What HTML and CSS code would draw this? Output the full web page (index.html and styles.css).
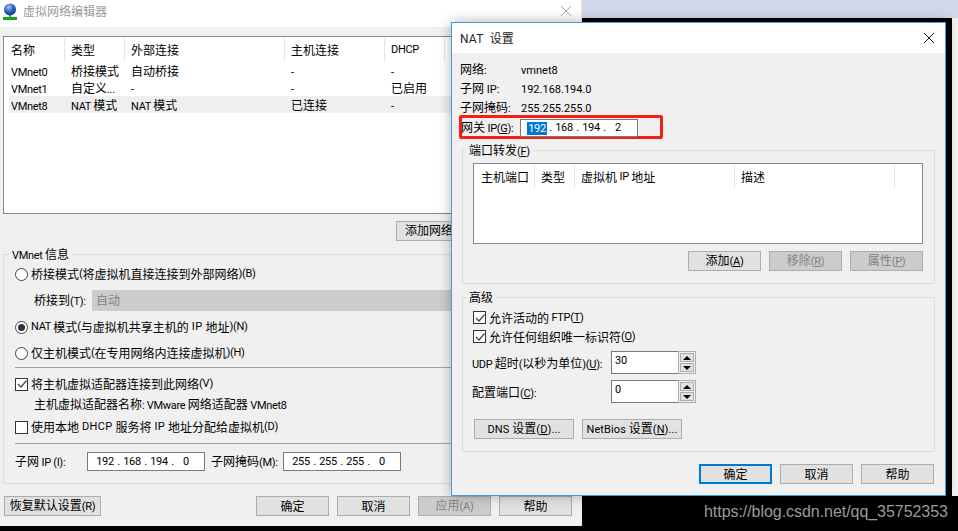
FILE: index.html
```html
<!DOCTYPE html>
<html lang="en">
<head>
    <meta charset="UTF-8">
    <meta name="viewport" content="width=device-width, initial-scale=1.0">
    <title>虚拟网络编辑器</title>
    <link rel="stylesheet" href="styles.css">
</head>
<body>
    <div class="strip"></div>
    <div class="edge"></div>

    <!-- back window -->
    <div class="window editor">
        <div class="titlebar">
            <svg class="app-icon" width="16" height="17" viewBox="0 0 16 17">
                <defs>
                    <radialGradient id="globe" cx="0.4" cy="0.3" r="0.8">
                        <stop offset="0" stop-color="#a9c4f2"/>
                        <stop offset="0.5" stop-color="#2f5fc4"/>
                        <stop offset="1" stop-color="#142f78"/>
                    </radialGradient>
                </defs>
                <rect x="7" y="11" width="2" height="3" fill="#7a8a7a"/>
                <rect x="1" y="14" width="14" height="3" fill="#12a51a"/>
                <circle cx="8" cy="6.5" r="6" fill="url(#globe)"/>
            </svg>
            <span class="title-text">虚拟网络编辑器</span>
            <svg class="close" width="12" height="12" viewBox="0 0 12 12"><path d="M1 1 L11 11 M11 1 L1 11" stroke="#a8a8a8" stroke-width="1" fill="none"/></svg>
        </div>

        <div class="list net-list">
            <div class="list-head">
                <span>名称</span><span>类型</span><span>外部连接</span><span>主机连接</span><span><em>DHCP</em></span>
            </div>
            <div class="list-row"><span><em>VMnet0</em></span><span>桥接模式</span><span>自动桥接</span><span><em>-</em></span><span><em>-</em></span></div>
            <div class="list-row"><span><em>VMnet1</em></span><span>自定义<em>...</em></span><span><em>-</em></span><span><em>-</em></span><span>已启用</span></div>
            <div class="list-row selected"><span><em>VMnet8</em></span><span><em>NAT </em>模式</span><span><em>NAT </em>模式</span><span>已连接</span><span><em>-</em></span></div>
        </div>

        <div class="list-actions">
            <button class="button wide">添加网络<em>(E)...</em></button>
            <button class="button">移除网络<em>(O)</em></button>
        </div>

        <fieldset class="group vmnet-group">
            <legend><em>VMnet </em>信息</legend>
            <div class="option first-option"><span class="radio"></span>桥接模式<em>(</em>将虚拟机直接连接到外部网络<em>)(B)</em></div>
            <div class="bridge-row">
                <span class="bridge-label">桥接到<em>(T):</em></span>
                <div class="select">自动</div>
            </div>
            <div class="option nat-option"><span class="radio checked"></span><em>NAT </em>模式<em>(</em>与虚拟机共享主机的<em class="gap"> IP </em>地址<em>)(N)</em></div>
            <div class="option host-option"><span class="radio"></span>仅主机模式<em>(</em>在专用网络内连接虚拟机<em>)(H)</em></div>
            <div class="rule rule-top"></div>
            <div class="option connect-option">
                <span class="check checked"><svg width="12" height="12" viewBox="0 0 12 12"><path d="M2 6 L5 9 L10.5 2.5" stroke="#444" stroke-width="1.2" fill="none"/></svg></span>将主机虚拟适配器连接到此网络<em>(V)</em>
            </div>
            <div class="adapter-name">主机虚拟适配器名称<em>: VMware </em>网络适配器<em> VMnet8</em></div>
            <div class="option dhcp-option"><span class="check"></span>使用本地<em class="gap">&nbsp;DHCP&nbsp;</em>服务将<em class="gap">&nbsp;IP&nbsp;</em>地址分配给虚拟机<em>(D)</em></div>
            <div class="rule rule-bottom"></div>
            <div class="subnet-row">
                <span class="subnet-label">子网<em> IP (I):</em></span>
                <div class="ip-field"><span>192</span><i>.</i><span>168</span><i>.</i><span>194</span><i>.</i><span>0</span></div>
                <span class="mask-label">子网掩码<em>(M):</em></span>
                <div class="ip-field"><span>255</span><i>.</i><span>255</span><i>.</i><span>255</span><i>.</i><span>0</span></div>
            </div>
        </fieldset>

        <div class="editor-footer">
            <button class="button restore">恢复默认设置<em>(R)</em></button>
            <button class="button">确定</button>
            <button class="button">取消</button>
            <button class="button disabled">应用<em>(A)</em></button>
            <button class="button">帮助</button>
        </div>
    </div>

    <!-- NAT dialog -->
    <div class="window dialog">
        <div class="dialog-title">
            <span><em>NAT&nbsp;&nbsp;</em>设置</span>
            <svg class="dialog-close" width="12" height="12" viewBox="0 0 12 12"><path d="M1 1 L11 11 M11 1 L1 11" stroke="#111" stroke-width="1" fill="none"/></svg>
        </div>
        <div class="dialog-body">
            <div class="info-row"><span>网络<em>:</em></span><span><em>vmnet8</em></span></div>
            <div class="info-row"><span>子网<em> IP:</em></span><span><em>192.168.194.0</em></span></div>
            <div class="info-row"><span>子网掩码<em>:</em></span><span><em>255.255.255.0</em></span></div>
            <div class="gateway">
                <span class="gateway-label">网关<em> IP(<u>G</u>):</em></span>
                <div class="ip-field gateway-field"><span class="picked">192</span><i>.</i><span>168</span><i>.</i><span>194</span><i>.</i><span>2</span></div>
            </div>

            <fieldset class="group forward-group">
                <legend>端口转发<em>(<u>F</u>)</em></legend>
                <div class="list port-list">
                    <div class="list-head">
                        <span>主机端口</span><span>类型</span><span>虚拟机<em>&nbsp;IP&nbsp;</em>地址</span><span>描述</span>
                    </div>
                </div>
                <div class="port-actions">
                    <button class="button">添加<em>(<u>A</u>)</em></button>
                    <button class="button disabled">移除<em>(<u>R</u>)</em></button>
                    <button class="button disabled">属性<em>(<u>P</u>)</em></button>
                </div>
            </fieldset>

            <fieldset class="group advanced-group">
                <legend>高级</legend>
                <div class="adv-check">
                    <span class="check checked"><svg width="12" height="12" viewBox="0 0 12 12"><path d="M2 6 L5 9 L10.5 2.5" stroke="#444" stroke-width="1.2" fill="none"/></svg></span>允许活动的<em>&nbsp;FTP(<u>T</u>)</em>
                </div>
                <div class="adv-check">
                    <span class="check checked"><svg width="12" height="12" viewBox="0 0 12 12"><path d="M2 6 L5 9 L10.5 2.5" stroke="#444" stroke-width="1.2" fill="none"/></svg></span>允许任何组织唯一标识符<em>(<u>O</u>)</em>
                </div>
                <div class="spin-row udp-row">
                    <span class="spin-label"><em>UDP </em>超时<em>(</em>以秒为单位<em>)(<u>U</u>):</em></span>
                    <div class="spin-input">30</div>
                    <div class="spin-buttons">
                        <span class="spin-btn"><b class="tri-up"></b></span>
                        <span class="spin-btn"><b class="tri-down"></b></span>
                    </div>
                </div>
                <div class="spin-row port-row">
                    <span class="spin-label">配置端口<em>(<u>C</u>):</em></span>
                    <div class="spin-input">0</div>
                    <div class="spin-buttons">
                        <span class="spin-btn"><b class="tri-up"></b></span>
                        <span class="spin-btn"><b class="tri-down"></b></span>
                    </div>
                </div>
                <div class="adv-actions">
                    <button class="button setting dns"><em>DNS </em>设置<em>(<u>D</u>)...</em></button>
                    <button class="button setting"><em>NetBios </em>设置<em>(<u>N</u>)...</em></button>
                </div>
            </fieldset>

            <div class="dialog-footer">
                <button class="button default">确定</button>
                <button class="button">取消</button>
                <button class="button">帮助</button>
            </div>
        </div>
    </div>

    <div class="watermark">https://blog.csdn.net/qq_35752353</div>
</body>
</html>
```

FILE: styles.css
```css
* {
    box-sizing: border-box;
}
html, body {
    margin: 0;
    height: 100%;
}
body {
    position: relative;
    width: 958px;
    height: 531px;
    overflow: hidden;
    background-color: #000;
    color: #000;
    font-family: "Noto Sans CJK SC", sans-serif;
    font-size: 12px;
    line-height: 16px;
}
u {
    text-decoration: underline;
}
/* latin runs sit a size below the CJK text */
em,
.ip-field,
.spin-input {
    font-family: Roboto, "Noto Sans", sans-serif;
    font-size: 11px;
    font-style: normal;
    letter-spacing: -0.3px;
}
em.gap {
    letter-spacing: 0.3px;
}

/* desktop behind the windows */
.strip {
    position: absolute;
    left: 582px;
    top: 0;
    width: 376px;
    height: 18px;
    background-color: #d1d6e9;
}
.edge {
    position: absolute;
    left: 952px;
    top: 18px;
    width: 6px;
    height: 478px;
    background-color: #f2f2f2;
}
.window {
    position: absolute;
    background-color: #f0f0f0;
}
.watermark {
    position: absolute;
    left: 704px;
    top: 502px;
    color: #9a9a9a;
    font-family: "Liberation Sans", Arial, sans-serif;
    font-size: 16px;
    line-height: 20px;
    letter-spacing: -0.05px;
}

/* shared controls */
.button {
    width: 73px;
    height: 20px;
    padding: 0;
    border: 1px solid #adadad;
    border-radius: 0;
    background-color: #e1e1e1;
    color: #000;
    font: inherit;
    line-height: 16px;
    white-space: nowrap;
}
.button.disabled {
    background-color: #ccc;
    color: #838383;
}
.group {
    margin: 0;
    padding: 0;
    border: 1px solid #dcdcdc;
    min-width: 0;
}
.group legend {
    margin-left: -7px;
    padding: 0 3px;
    height: 16px;
    line-height: 16px;
}
.list {
    border: 1px solid #828790;
    background-color: #fff;
}
.list-head {
    display: grid;
    height: 24px;
    margin-top: 1px;
}
.list-head > span {
    display: flex;
    align-items: center;
    padding-left: 6px;
    border-right: 1px solid #e5e5e5;
    white-space: pre;
}
.list-row {
    display: grid;
    height: 17px;
    line-height: 17px;
}
.list-row > span {
    padding-left: 6px;
    white-space: nowrap;
    overflow: hidden;
}
.list-row.selected {
    background-color: #efefef;
}
.radio {
    display: inline-block;
    flex: none;
    position: relative;
    width: 13px;
    height: 13px;
    margin-right: 3px;
    border: 1px solid #444;
    border-radius: 50%;
    background-color: #fff;
}
.radio.checked::after {
    content: "";
    position: absolute;
    left: 2px;
    top: 2px;
    width: 7px;
    height: 7px;
    border-radius: 50%;
    background-color: #333;
}
.check {
    display: inline-block;
    flex: none;
    width: 13px;
    height: 13px;
    margin-right: 3px;
    border: 1px solid #333;
    background-color: #fff;
}
.check svg {
    display: block;
    margin: -0.5px;
}
.ip-field {
    display: flex;
    width: 118px;
    height: 19px;
    padding-left: 7px;
    border: 1px solid #7a7a7a;
    background-color: #fff;
    line-height: 17px;
}
.ip-field span {
    width: 20px;
    text-align: center;
}
.ip-field i {
    width: 7px;
    font-style: normal;
    text-align: center;
}

/* back window */
.editor {
    left: 0;
    top: 0;
    width: 582px;
    height: 526px;
    padding: 0 6px 0 3px;
    border-right: 1px solid #e8e8e8;
}
.titlebar {
    display: flex;
    align-items: center;
    height: 27px;
    margin: 0 -6px 0 -3px;
    padding: 0 9px 5px 2px;
    background-color: #fff;
}
.app-icon {
    flex: none;
}
.title-text {
    margin-left: 5px;
    color: #9a9a9a;
}
.close {
    margin-left: auto;
}
.net-list {
    height: 178px;
    margin-top: 9px;
    padding-left: 5px;
}
.net-list .list-head,
.net-list .list-row {
    grid-template-columns: 56px 60px 160px 100px 60px 1fr;
}
.net-list .list-head > span:first-child,
.net-list .list-row > span:first-child {
    padding-left: 2px;
}
.list-actions {
    display: flex;
    justify-content: flex-end;
    gap: 8px;
    margin-top: 7px;
    padding-right: 3px;
}
.list-actions .button {
    width: 81px;
}
.list-actions .wide {
    width: 87px;
}
.vmnet-group {
    height: 238px;
    margin-top: 5px;
    padding: 0 11px;
}
.vmnet-group legend {
    margin-left: -6px;
}
.option {
    display: flex;
    align-items: center;
    height: 20px;
    white-space: pre;
}
.first-option {
    margin-top: 2px;
}
.bridge-row {
    display: flex;
    align-items: center;
    height: 21px;
    margin-top: 6px;
    padding-left: 19px;
}
.bridge-label {
    width: 58px;
}
.select {
    flex: 1;
    height: 21px;
    padding-left: 4px;
    background-color: #ccc;
    color: #838383;
    line-height: 20px;
}
.nat-option {
    margin-top: 6px;
}
.host-option {
    margin-top: 6px;
}
.rule {
    height: 1px;
    background-color: #a0a0a0;
}
.rule-top {
    margin-top: 4px;
}
.connect-option {
    margin-top: 6px;
    white-space: normal;
}
.adapter-name {
    height: 16px;
    margin-top: 2px;
    padding-left: 19px;
}
.dhcp-option {
    margin-top: 5px;
}
.rule-bottom {
    margin-top: 6px;
}
.subnet-row {
    display: flex;
    align-items: center;
    margin-top: 8px;
}
.subnet-label {
    width: 72px;
}
.mask-label {
    width: 72px;
    margin-left: 6px;
}
.editor-footer {
    display: flex;
    gap: 8px;
    margin-top: 12px;
    padding: 0 3px 0 1px;
}
.restore {
    width: 97px;
    margin-right: auto;
}

/* NAT dialog */
.dialog {
    left: 451px;
    top: 22px;
    width: 495px;
    height: 474px;
    border: 1px solid #3b9fe0;
    box-shadow: 0 0 12px rgba(0, 0, 0, 0.3);
}
.dialog-title {
    display: flex;
    align-items: center;
    justify-content: space-between;
    height: 30px;
    padding: 0 10px 0 8px;
    background-color: #fff;
    color: #222;
}
.dialog-title em {
    font-size: 12px;
    letter-spacing: 0.2px;
}
.dialog-body {
    padding: 6px 10px 0 8px;
}
.info-row {
    display: grid;
    grid-template-columns: 61px 1fr;
    height: 19px;
    line-height: 19px;
}
.info-row em {
    letter-spacing: 0;
}
.gateway {
    display: flex;
    align-items: flex-end;
    width: 204px;
    height: 24px;
    margin: -1px 0 0 -1px;
    border: 3px solid #f51f14;
    border-radius: 2px;
}
.gateway-label {
    width: 59px;
    margin: 0 0 -1px -1px;
    white-space: nowrap;
}
.gateway-field {
    height: 18px;
    margin-bottom: -1px;
    padding-left: 6px;
    line-height: 16px;
}
.picked {
    height: 13px;
    margin-top: 2px;
    background-color: #0078d7;
    color: #fff;
    line-height: 13px;
}
.forward-group {
    height: 142px;
    margin: 3px 0 0 2px;
    padding: 0 11px 0 10px;
}
.port-list {
    height: 81px;
    margin-top: 5px;
}
.port-list .list-head {
    grid-template-columns: 61px 40px 160px 160px 1fr;
}
.port-list .list-head > span:first-child {
    padding-left: 7px;
}
.port-actions {
    display: flex;
    justify-content: flex-end;
    gap: 8px;
    margin-top: 7px;
}
.advanced-group {
    height: 163px;
    margin: 5px 0 0 2px;
    padding: 0 0 0 10px;
}
.adv-check {
    display: flex;
    align-items: center;
    height: 19px;
}
.adv-check:first-of-type {
    margin-top: 3px;
}
.spin-row {
    display: flex;
    align-items: stretch;
    height: 23px;
}
.udp-row {
    margin-top: 5px;
}
.port-row {
    margin-top: 6px;
}
.spin-label {
    width: 139px;
    margin-left: -1px;
    line-height: 23px;
    white-space: nowrap;
}
.spin-input {
    width: 67px;
    padding: 1px 3px;
    border: 1px solid #7a7a7a;
    border-right: none;
    background-color: #fff;
}
.spin-buttons {
    display: flex;
    flex-direction: column;
    gap: 1px;
    width: 18px;
    padding: 1px;
    border: 1px solid #adadad;
}
.spin-btn {
    display: flex;
    flex: 1;
    align-items: center;
    justify-content: center;
    border: 1px solid #adadad;
    background-color: #e1e1e1;
}
.tri-up {
    border-left: 4px solid transparent;
    border-right: 4px solid transparent;
    border-bottom: 4px solid #000;
}
.tri-down {
    border-left: 4px solid transparent;
    border-right: 4px solid transparent;
    border-top: 4px solid #000;
}
.adv-actions {
    display: flex;
    gap: 8px;
    margin-top: 16px;
    padding-left: 1px;
}
.setting {
    width: 100px;
}
.setting em {
    letter-spacing: 0.1px;
}
.dialog-footer {
    display: flex;
    justify-content: flex-end;
    gap: 8px;
    margin-top: 12px;
    padding-right: 1px;
}
.default {
    border: 2px solid #0078d7;
}
```
